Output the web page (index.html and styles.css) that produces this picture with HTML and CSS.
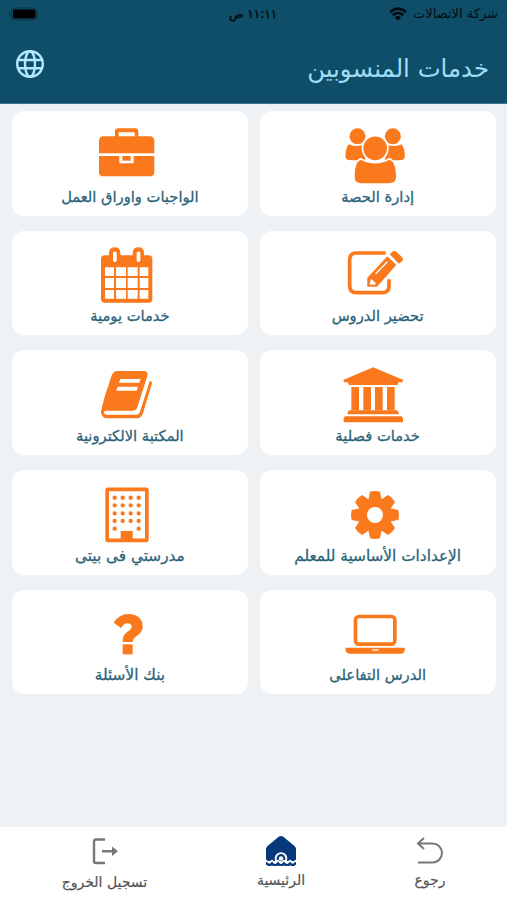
FILE: index.html
```html
<!DOCTYPE html>
<html lang="ar" dir="rtl">
<head>
    <meta charset="UTF-8">
    <meta name="viewport" content="width=device-width, initial-scale=1.0">
    <title>خدمات المنسوبين</title>
    <link rel="stylesheet" href="styles.css">
</head>
<body>

    <!-- Header -->
    <header class="header">
        <div class="status-bar">
            <div class="carrier">
                <span class="carrier-name">شركة الاتصالات</span>
                <svg class="wifi" viewBox="0 0 18 14">
                    <path d="M1 5.2Q9-2 17 5.2M3.8 8.2Q9 3.6 14.2 8.2" fill="none" stroke="#020b10" stroke-width="2.5"/>
                    <path d="M5.8 10.4Q9 7.6 12.2 10.4L9 13.6z" fill="#020b10"/>
                </svg>
            </div>
            <span class="clock">١١:١١ ص</span>
            <svg class="battery" viewBox="0 0 30 14">
                <rect x="3.5" y="1" width="25.5" height="12" rx="3.5" fill="none" stroke="#0a3346" stroke-width="1.2"/>
                <rect x="5" y="2.5" width="22.5" height="9" rx="2" fill="#000"/>
                <path d="M2 5v4Q.5 8.5 .5 7T2 5z" fill="#0a3346"/>
            </svg>
        </div>
        <div class="title-bar">
            <h1 class="title">خدمات المنسوبين</h1>
            <svg class="globe" viewBox="0 0 28 28" fill="none" stroke="#b4e9fd" stroke-width="2.4">
                <circle cx="14" cy="14" r="12.8"/>
                <ellipse cx="14" cy="14" rx="5" ry="12.8"/>
                <path d="M2.500 10h23M2.500 18.200h23"/>
            </svg>
        </div>
    </header>

    <!-- Services -->
    <main class="services">
        <a class="card">
            <svg class="icon" viewBox="0 0 180 168">
                <circle cx="37.5" cy="25" r="24"/>
                <circle cx="143.5" cy="25" r="24"/>
                <path d="M12 49Q26 57 51 52L62 95Q40 98 12 96Q1 95 1.500 83Q2 58 12 49z"/>
                <path d="M169 49Q155 57 130 52L119 95Q141 98 169 96Q180 95 179.500 83Q179 58 169 49z"/>
                <path class="cut" d="M47 92Q90 116 134 92Q156 101 155.500 146Q155 168 133 168H49Q27 168 26.500 146Q26 101 47 92z"/>
                <circle class="cut" cx="90.5" cy="61" r="38"/>
            </svg>
            <span class="label">إدارة الحصة</span>
        </a>
        <a class="card">
            <svg class="icon" viewBox="0 0 180 168">
                <path d="M54 25V11Q54 1 64 1H114Q124 1 124 11V25H158Q172 25 172 39V76H6V39Q6 25 20 25zM65 25H113V13H65z"/>
                <path d="M6 84H67V106H110V84H172V131Q172 145 158 145H20Q6 145 6 131z"/>
                <path d="M76 84H101V98H76z"/>
            </svg>
            <span class="label">الواجبات واوراق العمل</span>
        </a>
        <a class="card">
            <svg class="icon" viewBox="0 0 180 168">
                <path class="line" d="M122 18H34Q14 18 14 38V117Q14 137 34 137H112Q132 137 132 117V97"/>
                <path d="M67 119V92L127 28L154 54L96 119z"/>
                <path d="M134 22L141 15Q148 9 155 15L170 29Q177 36 171 43L162 50z"/>
                <path d="M92 80L127 44" fill="none" stroke="#fff" stroke-width="4"/>
                <path d="M74 113L77 97L84 99L87 105L93 107L90 113z" fill="#fff"/>
            </svg>
            <span class="label">تحضير الدروس</span>
        </a>
        <a class="card">
            <svg class="icon" viewBox="0 0 180 168">
                <path fill-rule="evenodd" d="M12 36Q12 25 23 25H36V18Q36 1 53 1T70 18V25H107V18Q107 1 124 1T141 18V25H155Q166 25 166 36V156Q166 167 155 167H23Q12 167 12 156z
                    M48 17V42Q53 49 59 42V17Q53 10 48 17z M119 17V42Q124 49 130 42V17Q124 10 119 17z
                    M24 61V87H51V61z M57 61V87H87V61z M92 61V87H122V61z M128 61V87H154V61z
                    M24 93V123H51V93z M57 93V123H87V93z M92 93V123H122V93z M128 93V123H154V93z
                    M24 129V155H51V129z M57 129V155H87V129z M92 129V155H122V129z M128 129V155H154V129z"/>
            </svg>
            <span class="label">خدمات يومية</span>
        </a>
        <a class="card">
            <svg class="icon" viewBox="0 0 180 168">
                <path d="M84.500 1L173.500 38V46H161L157 54H12L8 46H-4V38z"/>
                <path d="M19 60H42V130H19zM55 60H78V130H55zM90 60H113V130H90zM126 60H149V130H126z"/>
                <path d="M12 130H157L161 136V142H8V136zM0 148H170L174 153V166H-4V153z"/>
            </svg>
            <span class="label">خدمات فصلية</span>
        </a>
        <a class="card">
            <svg class="icon" viewBox="0 0 180 168">
                <path d="M60 12H142Q155 13 151 27L121 121Q118 131 108 131H27Q19 131 21 138Q23 143 30 143H118Q126 143 129 134L158 43Q166 41 165 49L138 139Q133 154 120 154H30Q16 154 12 139Q11 132 15 120L20 101L27 76L34 57L41 34Q47 12 60 12z"/>
                <path d="M70 36H131L127 47H66zM62 59H123L119 71H58z" fill="#fff"/>
            </svg>
            <span class="label">المكتبة الالكترونية</span>
        </a>
        <a class="card">
            <svg class="icon" viewBox="0 0 180 168">
                <g transform="translate(90 84)">
                    <path id="teeth" d="M-20-44L-15-70Q0-74 15-70L20-44V44L15 70Q0 74-15 70L-20 44z"/>
                    <use href="#teeth" transform="rotate(45)"/>
                    <use href="#teeth" transform="rotate(90)"/>
                    <use href="#teeth" transform="rotate(135)"/>
                    <circle r="51"/>
                    <circle r="24" fill="#fff"/>
                </g>
            </svg>
            <span class="label wide">الإعدادات الأساسية للمعلم</span>
        </a>
        <a class="card">
            <svg class="icon" viewBox="0 0 180 168">
                <rect class="line" x="30.5" y="7" width="119" height="153" rx="2"/>
                <path class="dots" d="M53 32h73M53 55h73M53 79h73M53 102h73M53 125h.1M125 125h.1"/>
                <path d="M71 132H107V160H71z"/>
            </svg>
            <span class="label wide">مدرستي فى بيتى</span>
        </a>
        <a class="card">
            <svg class="icon" viewBox="0 0 180 168">
                <rect class="line" x="31.5" y="31.5" width="118" height="83" rx="10"/>
                <path d="M1.500 125H179.500V132Q178 143 166 143H15Q3 143 1.500 132z"/>
                <path d="M82 130H100V134H82z" fill="#fff"/>
            </svg>
            <span class="label">الدرس التفاعلى</span>
        </a>
        <a class="card">
            <svg class="icon" viewBox="0 0 180 168">
                <path d="M50 50Q66 24 94 24Q137 26 137 63Q137 78 120 89Q107 97 107 108H77Q76 87 91 77Q104 69 104 62Q102 52 91 52Q81 52 72 66z"/>
                <path d="M77 115H107V145H77z"/>
            </svg>
            <span class="label wide">بنك الأسئلة</span>
        </a>
    </main>

    <!-- Bottom Navigation -->
    <nav class="bottom-nav">
        <a class="nav-item">
            <svg class="nav-icon" viewBox="0 0 30 30" fill="none" stroke="#777" stroke-width="2">
                <path d="M3 7.500H17.500A9.300 9.300 0 0 1 17.500 26.500H3M9 2L3 7.500L9 13"/>
            </svg>
            <span class="nav-label">رجوع</span>
        </a>
        <a class="nav-item nav-home">
            <svg class="nav-icon" viewBox="0 0 30 30">
                <path d="M13 .6Q15-.6 17 .6L28.500 10Q30 11.500 30 13V25H0V13Q0 11.500 1.500 10z" fill="#06397a"/>
                <circle cx="15" cy="22.5" r="6.3" fill="#fff"/>
                <circle cx="15" cy="22.5" r="4.4" fill="#06397a"/>
                <circle cx="15" cy="22.5" r="2.2" fill="#fff"/>
                <path d="M0 23.500Q3 27 6 23.500Q9 27 12 23.500Q15 27 18 23.500Q21 27 24 23.500Q27 27 30 23.500V30H0z" fill="#fff"/>
                <path d="M0 26.500Q3 31 6 27.500Q9 31 12 27.500Q15 31 18 27.500Q21 31 24 27.500Q27 31 30 26.500" fill="none" stroke="#06397a" stroke-width="2.6"/>
            </svg>
            <span class="nav-label">الرئيسية</span>
        </a>
        <a class="nav-item nav-logout">
            <svg class="nav-icon" viewBox="0 0 30 30">
                <path d="M15 3.500H6Q4 3.500 4 5.500V25Q4 27 6 27H15M12 15.200H24" fill="none" stroke="#777" stroke-width="2.4"/>
                <path d="M22 10.500L28 15.200L22 20z" fill="#777"/>
            </svg>
            <span class="nav-label">تسجيل الخروج</span>
        </a>
    </nav>

</body>
</html>
```
FILE: styles.css
```css
* {
    box-sizing: border-box;
}

body {
    display: flex;
    flex-direction: column;
    height: 100vh;
    margin: 0;
    background-color: #eef2f5;
    font-family: "DejaVu Sans", sans-serif;
}

.header {
    height: 104px;
    background-color: #0f4e68;
    border-bottom: 1px solid #427694;
}

.status-bar {
    display: grid;
    grid-template-columns: 1fr auto 1fr;
    align-items: center;
    height: 27px;
    padding: 0 9px 0 8px;
    font-size: 13px;
    color: #020b10;
}

.carrier {
    display: flex;
    align-items: center;
    gap: 6px;
}

.wifi {
    width: 18px;
    height: 14px;
}

.battery {
    width: 30px;
    height: 14px;
    justify-self: end;
}

.clock {
    font-size: 12px;
    -webkit-text-stroke: 0.5px #020b10;
}

.title-bar {
    display: flex;
    justify-content: space-between;
    align-items: center;
    height: 76px;
    padding: 4px 18px 10px 16px;
}

.title {
    margin: 12px 0 0;
    font-size: 24.4px;
    font-weight: normal;
    color: #9fdcf5;
}

.globe {
    width: 28px;
    height: 28px;
    margin-top: 3px;
}

.services {
    flex: 1;
    display: grid;
    grid-template-columns: 1fr 1fr;
    grid-auto-rows: 104.7px;
    gap: 15px 12px;
    padding: 7px 11.5px 0 12px;
}

.card {
    display: flex;
    flex-direction: column;
    align-items: center;
    padding-top: 16.5px;
    background-color: #fff;
    border-radius: 12px;
}

.icon {
    width: 60px;
    height: 56px;
    margin-right: 6px;
    overflow: visible;
    fill: #fb791d;
}

.icon .cut {
    stroke: #fff;
    stroke-width: 5;
}

.icon .line {
    fill: none;
    stroke: #fb791d;
    stroke-width: 11;
}

.icon .dots {
    fill: none;
    stroke: #fb791d;
    stroke-width: 13;
    stroke-linecap: round;
    stroke-dasharray: 0 24;
}

.label {
    font-size: 14.7px;
    line-height: 26px;
    color: #2b6379;
    white-space: nowrap;
    -webkit-text-stroke: 0.3px #2b6379;
}

.label.wide {
    font-size: 15.3px;
}

.bottom-nav {
    display: grid;
    grid-template-columns: 154px 144px 1fr;
    height: 73px;
    padding-top: 9px;
    background-color: #fff;
}

.nav-item {
    display: flex;
    flex-direction: column;
    align-items: center;
}

.nav-icon {
    width: 30px;
    height: 30px;
}

.nav-label {
    font-size: 14px;
    line-height: 28px;
    color: #555;
    white-space: nowrap;
    -webkit-text-stroke: 0.2px #555;
}

.nav-logout .nav-label {
    margin-top: 2px;
}
```
